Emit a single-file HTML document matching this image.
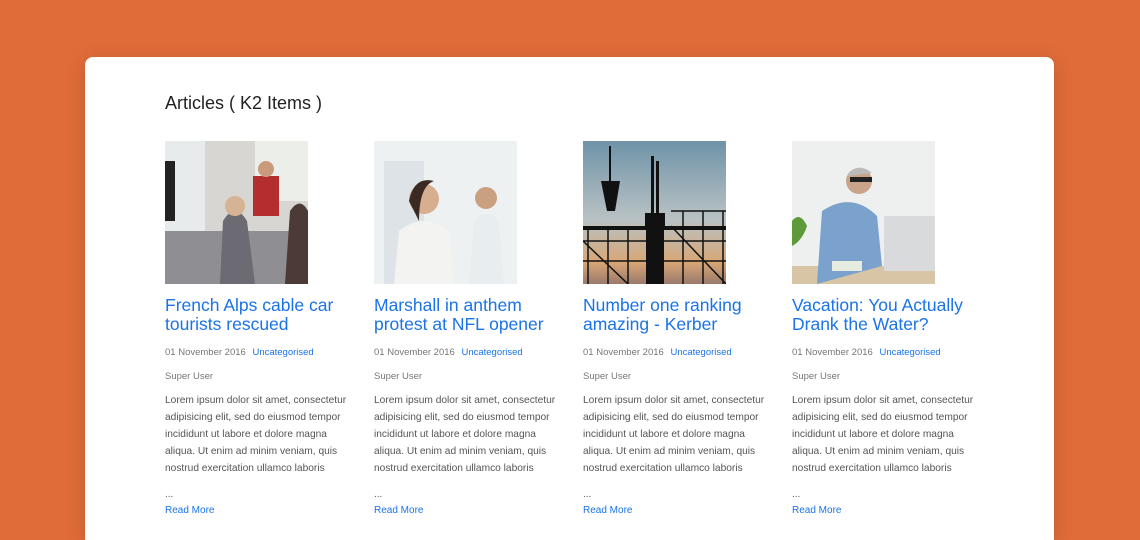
<!DOCTYPE html>
<html><head><meta charset="utf-8"><style>
html,body{margin:0;width:1140px;height:540px;overflow:hidden}
body{background:#e06c39;font-family:"Liberation Sans",sans-serif}
.card{position:absolute;left:85px;top:57px;width:969px;height:483px;background:#fff;border-radius:8px 8px 0 0;box-shadow:0 4px 20px rgba(0,0,0,.15)}
h2{position:absolute;left:80px;top:36px;margin:0;font-weight:normal;font-size:18px;color:#222}
.col{position:absolute;top:84px;width:190px}
.img{width:143px;height:143px;display:block}
.t{margin:12px 0 0;font-size:17.5px;line-height:19px;color:#1a73e8;font-weight:normal}
.meta{font-size:9.5px;color:#777;margin-top:13px}
.meta a{color:#1a73e8;margin-left:4px}
.au{font-size:9.5px;color:#777;margin-top:13px}
.b{font-size:10.2px;line-height:17px;color:#555;margin-top:10px}
.d{font-size:10px;color:#555;margin-top:12px}
.rm{font-size:10px;color:#1a73e8;margin-top:5px}
</style></head><body>
<div class="card">
<h2>Articles ( K2 Items )</h2>

<div class="col" style="left:80px">
<svg class="img" viewBox="0 0 143 143"><rect width="143" height="143" fill="#d8d6d2"/><rect x="0" y="0" width="40" height="90" fill="#e8ebeb"/><rect x="90" y="0" width="53" height="60" fill="#eceee9"/><rect x="0" y="90" width="143" height="53" fill="#8f8f93"/><rect x="88" y="35" width="26" height="40" fill="#b42d2f"/><circle cx="101" cy="28" r="8" fill="#c99a7c"/><path d="M55 143 L58 80 Q70 60 82 80 L90 143Z" fill="#6c6a72"/><circle cx="70" cy="65" r="10" fill="#d6b392"/><path d="M120 143 L125 70 Q135 55 143 70 L143 143Z" fill="#4b3a36"/><rect x="0" y="20" width="10" height="60" fill="#222"/></svg>
<p class="t">French Alps cable car tourists rescued</p>
<div class="meta">01 November 2016 <a>Uncategorised</a></div>
<div class="au">Super User</div>
<div class="b">Lorem ipsum dolor sit amet, consectetur adipisicing elit, sed do eiusmod tempor incididunt ut labore et dolore magna aliqua. Ut enim ad minim veniam, quis nostrud exercitation ullamco laboris</div>
<div class="d">...</div><div class="rm">Read More</div>
</div>

<div class="col" style="left:289px">
<svg class="img" viewBox="0 0 143 143"><rect width="143" height="143" fill="#eef1f2"/><rect x="10" y="20" width="40" height="123" fill="#dde3e6"/><path d="M95 143 L100 80 Q112 65 125 80 L130 143Z" fill="#e8eef0"/><circle cx="112" cy="57" r="11" fill="#c9a080"/><path d="M20 143 L25 90 Q50 70 75 90 L80 143Z" fill="#f3f3f1"/><circle cx="50" cy="58" r="15" fill="#d7ae90"/><path d="M35 60 Q40 35 60 40 Q45 45 45 80Z" fill="#3a2a22"/></svg>
<p class="t">Marshall in anthem protest at NFL opener</p>
<div class="meta">01 November 2016 <a>Uncategorised</a></div>
<div class="au">Super User</div>
<div class="b">Lorem ipsum dolor sit amet, consectetur adipisicing elit, sed do eiusmod tempor incididunt ut labore et dolore magna aliqua. Ut enim ad minim veniam, quis nostrud exercitation ullamco laboris</div>
<div class="d">...</div><div class="rm">Read More</div>
</div>

<div class="col" style="left:498px">
<svg class="img" viewBox="0 0 143 143"><defs><linearGradient id="s" x1="0" y1="0" x2="0" y2="1"><stop offset="0" stop-color="#6f93a8"/><stop offset=".55" stop-color="#b9c2c4"/><stop offset=".85" stop-color="#d8a675"/><stop offset="1" stop-color="#9a7a6c"/></linearGradient></defs><rect width="143" height="143" fill="url(#s)"/><g fill="#111"><rect x="0" y="85" width="143" height="4"/><rect x="63" y="85" width="18" height="58"/><rect x="68" y="15" width="3" height="75"/><rect x="73" y="20" width="3" height="70"/><path d="M18 40 H37 L32 70 H24Z"/><rect x="26" y="5" width="2" height="35"/><rect x="62" y="72" width="20" height="15"/><rect x="64" y="72" width="2" height="71"/></g><g stroke="#111" stroke-width="1.5"><path d="M0 100H143M0 120H143M5 85V143M25 85V143M45 85V143M100 70V143M120 70V143M140 70V143M88 70H143M88 85L143 143M0 100L45 143"/></g></svg>
<p class="t">Number one ranking amazing - Kerber</p>
<div class="meta">01 November 2016 <a>Uncategorised</a></div>
<div class="au">Super User</div>
<div class="b">Lorem ipsum dolor sit amet, consectetur adipisicing elit, sed do eiusmod tempor incididunt ut labore et dolore magna aliqua. Ut enim ad minim veniam, quis nostrud exercitation ullamco laboris</div>
<div class="d">...</div><div class="rm">Read More</div>
</div>

<div class="col" style="left:707px">
<svg class="img" viewBox="0 0 143 143"><rect width="143" height="143" fill="#eef0f0"/><rect x="0" y="125" width="143" height="18" fill="#d8c5a5"/><path d="M25 143 L30 70 Q60 50 85 75 L90 125Z" fill="#7aa2cc"/><circle cx="67" cy="40" r="13" fill="#c9a48a"/><path d="M55 35 Q65 20 80 32Z" fill="#bbb"/><rect x="58" y="36" width="22" height="5" fill="#222"/><rect x="92" y="75" width="51" height="55" fill="#d9dadb"/><path d="M0 80 Q8 70 15 85 Q10 100 0 105Z" fill="#5c9a3a"/><rect x="40" y="120" width="30" height="10" fill="#e6ece0"/></svg>
<p class="t">Vacation: You Actually Drank the Water?</p>
<div class="meta">01 November 2016 <a>Uncategorised</a></div>
<div class="au">Super User</div>
<div class="b">Lorem ipsum dolor sit amet, consectetur adipisicing elit, sed do eiusmod tempor incididunt ut labore et dolore magna aliqua. Ut enim ad minim veniam, quis nostrud exercitation ullamco laboris</div>
<div class="d">...</div><div class="rm">Read More</div>
</div>
</div>
</body></html>
